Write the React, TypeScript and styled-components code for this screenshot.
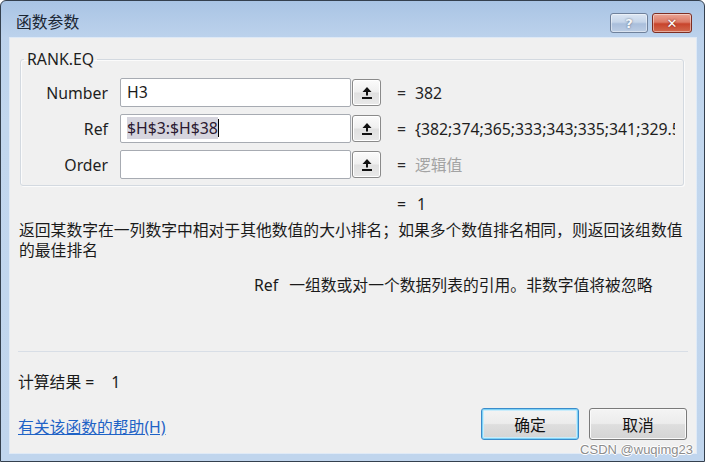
import React from "react";
import styled, { createGlobalStyle } from "styled-components";

const FONT = `"Noto Sans", "Noto Sans CJK SC", sans-serif`;

const GlobalStyle = createGlobalStyle`
  html, body { margin: 0; padding: 0; background: #ffffff; }
  body { font-family: ${FONT}; overflow: hidden; }
  #root { width: 708px; height: 467px; }
`;

const Window = styled.div`
  position: relative;
  box-sizing: border-box;
  width: 705px;
  height: 462px;
  border: 1px solid #34404e;
  border-radius: 6px 6px 0 0;
  background: linear-gradient(#a9c4e4 0px, #bcd2ec 36px, #c2d7ee 120px, #c0d5ed);
  padding: 0 8px 8px 9px;
  display: flex;
  flex-direction: column;
  font-family: ${FONT};
`;

const TitleBar = styled.div`
  height: 37px;
  flex-shrink: 0;
  display: flex;
  align-items: flex-start;
  padding: 0 4px 0 6px;
`;

const Title = styled.div`
  margin-top: 11px;
  font-size: 15.8px;
  line-height: 20px;
  color: #1b2633;
`;

const Spacer = styled.div`
  flex: 1;
`;

const CaptionButtons = styled.div`
  margin-top: 12px;
  display: flex;
  gap: 4px;
`;

const CaptionButton = styled.div<{ $close?: boolean }>`
  box-sizing: border-box;
  width: ${(p) => (p.$close ? 40 : 38)}px;
  height: 20px;
  border-radius: 3px;
  border: 1px solid ${(p) => (p.$close ? "#7e2e22" : "#6f819b")};
  background: ${(p) =>
    p.$close
      ? "linear-gradient(#eaa595 0%, #dc7a66 45%, #c8442c 55%, #d26a4f 100%)"
      : "linear-gradient(#dbe6f3 0%, #c5d5e9 45%, #a9bedb 55%, #bccde4 100%)"};
  box-shadow: inset 0 0 0 1px rgba(255, 255, 255, 0.45);
  display: flex;
  align-items: center;
  justify-content: center;
  color: ${(p) => (p.$close ? "#ffffff" : "#f4f7fb")};
  font-family: "DejaVu Sans", sans-serif;
  font-weight: bold;
  font-size: ${(p) => (p.$close ? 13 : 13)}px;
  text-shadow: 0 0 2px ${(p) => (p.$close ? "#6a1a10" : "#4c5d75")};
`;

const Client = styled.div`
  flex: 1;
  background: #f0f0f0;
  display: flex;
  flex-direction: column;
  padding-bottom: 13px;
  box-shadow: 0 0 0 1px rgba(255, 255, 255, 0.5);
`;

const Group = styled.fieldset`
  margin: 12px 12px 0 10px;
  padding: 10px 8px 6px 0;
  border: 1px solid #d3d9e0;
  border-radius: 3px;
  box-shadow: inset 1px 1px 0 #fbfbfb, 1px 1px 0 #fbfbfb;
  min-width: 0;
`;

const Legend = styled.legend`
  margin-left: 3px;
  padding: 0 3px;
  font-size: 15.8px;
  line-height: 18px;
  color: #1e1e1e;
`;

const Rows = styled.div`
  display: flex;
  flex-direction: column;
  gap: 7px;
`;

const Row = styled.div`
  display: flex;
  align-items: center;
  height: 29px;
`;

const Label = styled.div`
  width: 87px;
  flex-shrink: 0;
  text-align: right;
  font-size: 15.8px;
  color: #1e1e1e;
`;

const InputBox = styled.div`
  box-sizing: border-box;
  margin-left: 12px;
  width: 231px;
  height: 29px;
  flex-shrink: 0;
  border: 1px solid #a7abb2;
  border-radius: 2px;
  background: #ffffff;
  padding-left: 6px;
  font-size: 15.8px;
  line-height: 27px;
  color: #1a1a1a;
  white-space: nowrap;
  overflow: hidden;
`;

const Selected = styled.span`
  background: #d6d5de;
  color: #2a1830;
`;

const Caret = styled.span`
  display: inline-block;
  width: 1px;
  height: 18px;
  background: #000;
  vertical-align: -3px;
`;

const PickButton = styled.div`
  box-sizing: border-box;
  margin-left: 1px;
  width: 29px;
  height: 27px;
  flex-shrink: 0;
  border: 1px solid #8a8a8a;
  border-radius: 3px;
  background: linear-gradient(#fbfbfb 0%, #efefef 48%, #e0e0e0 52%, #e9e9e9 100%);
  box-shadow: inset 0 0 0 1px #ffffff;
  display: flex;
  align-items: center;
  justify-content: center;
`;

const Eq = styled.div`
  margin-left: 16px;
  width: 10px;
  flex-shrink: 0;
  font-size: 15.8px;
  color: #2a2a2a;
`;

const Value = styled.div<{ $hint?: boolean }>`
  margin-left: 8px;
  flex: 1;
  min-width: 0;
  overflow: hidden;
  white-space: nowrap;
  font-size: 15.8px;
  color: ${(p) => (p.$hint ? "#a3a3a3" : "#1e1e1e")};
`;

const ResultEq = styled.div`
  margin-top: 8px;
  padding-left: 387px;
  display: flex;
  font-size: 15.8px;
  line-height: 20px;
  color: #1e1e1e;
`;

const ResultOne = styled.span`
  margin-left: 11px;
`;

const Description = styled.div`
  margin-top: 6px;
  padding-left: 9px;
  font-size: 15.8px;
  line-height: 20px;
  color: #1a1a1a;
`;

const DescLine = styled.div`
  white-space: nowrap;
`;

const ParamDesc = styled.div`
  margin-top: 15px;
  padding-left: 244px;
  display: flex;
  font-size: 15.8px;
  line-height: 20px;
  color: #1a1a1a;
  white-space: nowrap;
`;

const ParamName = styled.span`
  margin-right: 11px;
`;

const Separator = styled.div`
  margin: auto 8px 0 8px;
  height: 1px;
  background: #d8dee6;
  flex-shrink: 0;
`;

const CalcResult = styled.div`
  margin-top: 20px;
  padding-left: 8px;
  display: flex;
  font-size: 15.8px;
  line-height: 20px;
  color: #1a1a1a;
`;

const CalcEq = styled.span`
  margin-left: 4px;
`;

const CalcValue = styled.span`
  margin-left: 17px;
`;

const Footer = styled.div`
  margin-top: 16px;
  height: 32px;
  display: flex;
  align-items: center;
  padding: 0 9px 0 8px;
`;

const HelpLink = styled.a`
  margin-top: 5px;
  font-size: 15.8px;
  color: #1f63c6;
  text-decoration: underline;
  cursor: pointer;
`;

const DialogButton = styled.div<{ $focused?: boolean }>`
  box-sizing: border-box;
  width: 98px;
  height: 32px;
  border-radius: 3px;
  border: 1px solid ${(p) => (p.$focused ? "#3a8ccb" : "#7a7a7a")};
  box-shadow: ${(p) =>
    p.$focused ? "inset 0 0 0 1px #7fd2f6, inset 0 0 0 2px #c9ecfb" : "inset 0 0 0 1px #fafafa"};
  background: linear-gradient(#f4f4f4 0%, #ececec 48%, #dedede 52%, #d4d4d4 100%);
  display: flex;
  align-items: center;
  justify-content: center;
  font-size: 15.8px;
  color: #111;
  & + & {
    margin-left: 10px;
  }
`;

const Watermark = styled.div`
  position: absolute;
  right: 11px;
  top: 441px;
  font-family: "Liberation Sans", Arial, sans-serif;
  font-size: 13px;
  line-height: 15px;
  color: #8c8c8c;
  text-shadow: 0 0 1px #fff, 0 0 1px #fff, 1px 0 0 #fff, -1px 0 0 #fff, 0 1px 0 #fff, 0 -1px 0 #fff;
`;

const PickIcon = () => (
  <svg width="12" height="14" viewBox="0 0 12 14">
    <polygon points="6,1 1.5,6 10.5,6" fill="#111" />
    <rect x="5" y="5.5" width="2" height="4" fill="#111" />
    <rect x="1" y="11" width="10" height="2" fill="#111" />
  </svg>
);

type Param = {
  label: string;
  content: React.ReactNode;
  value: string;
  hint?: boolean;
};

const params: Param[] = [
  { label: "Number", content: "H3", value: "382" },
  {
    label: "Ref",
    content: (
      <>
        <Selected>$H$3:$H$38</Selected>
        <Caret />
      </>
    ),
    value: "{382;374;365;333;343;335;341;329.5;340;327;318}",
  },
  { label: "Order", content: "", value: "逻辑值", hint: true },
];

export default function App() {
  return (
    <>
      <GlobalStyle />
      <Window>
        <TitleBar>
          <Title>函数参数</Title>
          <Spacer />
          <CaptionButtons>
            <CaptionButton>?</CaptionButton>
            <CaptionButton $close>✕</CaptionButton>
          </CaptionButtons>
        </TitleBar>
        <Client>
          <Group>
            <Legend>RANK.EQ</Legend>
            <Rows>
              {params.map((p) => (
                <Row key={p.label}>
                  <Label>{p.label}</Label>
                  <InputBox>{p.content}</InputBox>
                  <PickButton>
                    <PickIcon />
                  </PickButton>
                  <Eq>=</Eq>
                  <Value $hint={p.hint}>{p.value}</Value>
                </Row>
              ))}
            </Rows>
          </Group>
          <ResultEq>
            <span>=</span>
            <ResultOne>1</ResultOne>
          </ResultEq>
          <Description>
            <DescLine>返回某数字在一列数字中相对于其他数值的大小排名；如果多个数值排名相同，则返回该组数值</DescLine>
            <DescLine>的最佳排名</DescLine>
          </Description>
          <ParamDesc>
            <ParamName>Ref</ParamName>
            <span>一组数或对一个数据列表的引用。非数字值将被忽略</span>
          </ParamDesc>
          <Separator />
          <CalcResult>
            <span>计算结果</span>
            <CalcEq>=</CalcEq>
            <CalcValue>1</CalcValue>
          </CalcResult>
          <Footer>
            <HelpLink>有关该函数的帮助(H)</HelpLink>
            <Spacer />
            <DialogButton $focused>确定</DialogButton>
            <DialogButton>取消</DialogButton>
          </Footer>
        </Client>
        <Watermark>CSDN @wuqimg23</Watermark>
      </Window>
    </>
  );
}
